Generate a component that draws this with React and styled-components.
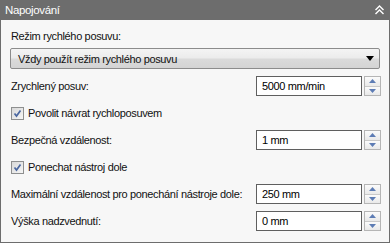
import React from "react";
import styled, { createGlobalStyle } from "styled-components";

const Global = createGlobalStyle`
  html, body { margin: 0; padding: 0; background: #f7f7f7; }
  body {
    font-family: "Liberation Sans", Arial, sans-serif;
    font-size: 11px;
    letter-spacing: -0.35px;
    color: #111;
  }
`;

const Panel = styled.div`
  width: 390px;
  height: 243px;
  box-sizing: border-box;
  display: flex;
  flex-direction: column;
`;

const Header = styled.div`
  height: 20px;
  flex: none;
  background: #6d6d6d;
  color: #ffffff;
  display: flex;
  align-items: center;
  justify-content: space-between;
  padding: 0 6px 0 5px;
  font-size: 11.5px;
`;

const Body = styled.div`
  flex: 1;
  background: #f7f7f7;
  border: 1px solid #6d6d6d;
  border-top: none;
  padding: 8px 8px 0 9px;
  display: flex;
  flex-direction: column;
`;

const Label = styled.div`
  height: 16px;
  line-height: 16px;
  white-space: nowrap;
  padding-left: ${(p) => p.$indent || 0}px;
`;

const Select = styled.div`
  margin-top: 4px;
  height: 21px;
  box-sizing: border-box;
  border: 1px solid #8c8c8c;
  border-radius: 2px;
  background: linear-gradient(#f4f4f4 0%, #ececec 45%, #dadada 55%, #d4d4d4 100%);
  display: flex;
  align-items: center;
  justify-content: space-between;
  padding: 0 5px 0 7px;
  margin-right: 1px;
`;

const Stack = styled.div`
  margin-top: 7px;
  display: flex;
  flex-direction: column;
  gap: ${(p) => p.$gap || 7}px;
`;

const Row = styled.div`
  height: 20px;
  display: flex;
  align-items: center;
  justify-content: space-between;
  padding-left: 1px;
  white-space: nowrap;
`;

const Spin = styled.div`
  display: flex;
  align-items: stretch;
  gap: 2px;
  height: 20px;
  flex: none;
`;

const Input = styled.div`
  width: 106px;
  box-sizing: border-box;
  border: 1px solid #5f5f5f;
  background: #ffffff;
  display: flex;
  align-items: center;
  padding-left: 5px;
  color: #000;
`;

const SpinButtons = styled.div`
  width: 17px;
  box-sizing: border-box;
  border: 1px solid #b5b5b5;
  background: #f3f3f3;
  display: flex;
  flex-direction: column;
`;

const SpinHalf = styled.div`
  flex: 1;
  display: flex;
  align-items: center;
  justify-content: center;
  background: linear-gradient(#fbfbfb, #e9e9e9);
  border-top: ${(p) => (p.$bottom ? "1px solid #c9c9c9" : "none")};
`;

const CheckRow = styled.label`
  height: 20px;
  display: flex;
  align-items: center;
  gap: 4px;
  padding-left: 1px;
  white-space: nowrap;
`;

const Box = styled.span`
  width: 13px;
  height: 13px;
  box-sizing: border-box;
  border: 1px solid #8e8f8f;
  background: linear-gradient(135deg, #d8d8d8, #f6f6f6);
  display: flex;
  align-items: center;
  justify-content: center;
`;

const Arrow = ({ up }) => (
  <svg width="7" height="4" viewBox="0 0 7 4">
    {up ? (
      <path d="M3.5 0 L7 4 L0 4 Z" fill="#5d7cb4" />
    ) : (
      <path d="M0 0 L7 0 L3.5 4 Z" fill="#5d7cb4" />
    )}
  </svg>
);

const Spinner = ({ value }) => (
  <Spin>
    <Input>{value}</Input>
    <SpinButtons>
      <SpinHalf>
        <Arrow up />
      </SpinHalf>
      <SpinHalf $bottom>
        <Arrow />
      </SpinHalf>
    </SpinButtons>
  </Spin>
);

const Check = ({ children }) => (
  <CheckRow>
    <Box>
      <svg width="9" height="9" viewBox="0 0 9 9">
        <path d="M1.5 4.5 L3.5 7 L7.5 1.5" stroke="#4a67a0" strokeWidth="1.7" fill="none" />
      </svg>
    </Box>
    {children}
  </CheckRow>
);

export default function App() {
  return (
    <>
      <Global />
      <Panel>
        <Header>
          <span>Napojování</span>
          <svg width="9" height="10" viewBox="0 0 9 10">
            <path d="M0.5 5 L4.5 1 L8.5 5 M0.5 9 L4.5 5 L8.5 9" stroke="#fff" strokeWidth="1.4" fill="none" />
          </svg>
        </Header>
        <Body>
          <Label $indent={1}>Režim rychlého posuvu:</Label>
          <Select>
            <span>Vždy použít režim rychlého posuvu</span>
            <svg width="8" height="5" viewBox="0 0 8 5">
              <path d="M0 0 L8 0 L4 5 Z" fill="#000" />
            </svg>
          </Select>
          <Stack>
            <Row>
              <span>Zrychlený posuv:</span>
              <Spinner value="5000 mm/min" />
            </Row>
            <Check>Povolit návrat rychloposuvem</Check>
            <Row>
              <span>Bezpečná vzdálenost:</span>
              <Spinner value="1 mm" />
            </Row>
            <Check>Ponechat nástroj dole</Check>
            <Row>
              <span>Maximální vzdálenost pro ponechání nástroje dole:</span>
              <Spinner value="250 mm" />
            </Row>
            <Row>
              <span>Výška nadzvednutí:</span>
              <Spinner value="0 mm" />
            </Row>
          </Stack>
        </Body>
      </Panel>
    </>
  );
}
